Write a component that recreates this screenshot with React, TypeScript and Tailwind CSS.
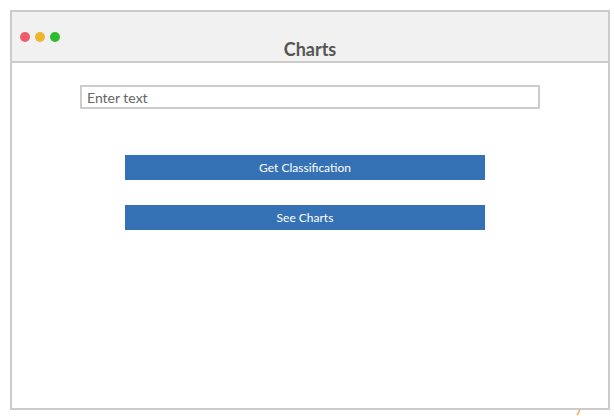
import React from "react";

const dots = ["bg-[#ee5c6c]", "bg-[#f0b52e]", "bg-[#2cbd2c]"];

const App = () => {
  return (
    <div className="relative w-[614px] h-[418px] bg-white pl-[10px] pt-[10px] font-['Lato','Liberation_Sans',sans-serif]">
      <div className="w-[600px] h-[400px] border-2 border-[#cccccc] flex flex-col">
        <div className="grid h-[51px] bg-[#f1f1f1] border-b-2 border-[#cccccc]">
          <div className="[grid-area:1/1] flex gap-[5px] pl-[8px] pt-[20px]">
            {dots.map((c) => (
              <span key={c} className={`w-[10px] h-[10px] rounded-full ${c}`} />
            ))}
          </div>
          <div className="[grid-area:1/1] flex items-end justify-center pb-[1px]">
            <span className="text-[18px] leading-[22px] font-bold text-[#555555]">Charts</span>
          </div>
        </div>

        <div className="flex flex-col pt-[22px]">
          <input
            type="text"
            placeholder="Enter text"
            className="self-center w-[460px] h-[24px] border-2 border-[#cccccc] px-[5px] text-[14px] text-[#555555] placeholder:text-[#666666] outline-none"
          />
          <div className="flex flex-col gap-[25px] ml-[113px] mt-[46px]">
            <button className="w-[360px] h-[25px] bg-[#3572b5] text-white text-[12px]">
              Get Classification
            </button>
            <button className="w-[360px] h-[25px] bg-[#3572b5] text-white text-[12px]">
              See Charts
            </button>
          </div>
        </div>
      </div>
      <svg className="absolute left-[576px] top-[409px]" width="6" height="7" viewBox="0 0 6 7">
        <path d="M1 6 L4 1" stroke="#f2b260" strokeWidth="1.5" />
      </svg>
    </div>
  );
};

export default App;
